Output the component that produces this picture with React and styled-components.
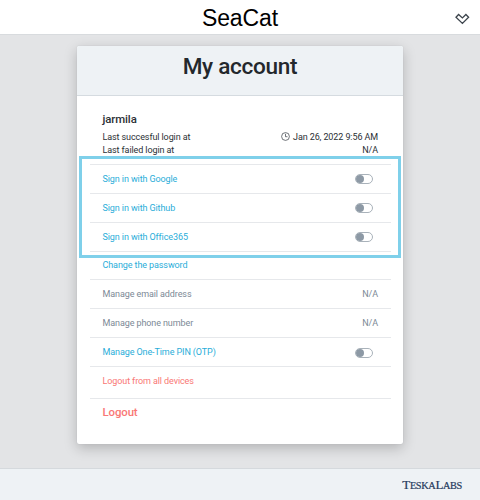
import React from "react";
import styled, { createGlobalStyle } from "styled-components";

const GlobalStyle = createGlobalStyle`
  * { box-sizing: border-box; }
  body { margin: 0; overflow: hidden; }
`;

const Page = styled.div`
  width: 480px;
  height: 500px;
  display: flex;
  flex-direction: column;
  background: #e3e4e6;
  font-family: Roboto, sans-serif;
  font-size: 9px;
  letter-spacing: -0.1px;
  color: #2b3035;
`;

const TopBar = styled.header`
  height: 35px;
  flex: none;
  display: grid;
  grid-template-columns: 1fr auto 1fr;
  align-items: center;
  padding: 0 10px;
  background: #fff;
  border-bottom: 1px solid #d8dbde;
`;

const Brand = styled.div`
  grid-column: 2;
  font: 23px/34px "Liberation Sans", sans-serif;
  letter-spacing: -0.1px;
  color: #000;
  padding-top: 1px;
`;

const MenuIcon = styled.svg`
  justify-self: end;
  width: 16px;
  height: 12px;
  margin-top: 3px;
`;

const Main = styled.main`
  flex: 1;
  display: flex;
  justify-content: center;
  align-items: flex-start;
  padding-top: 11px;
`;

const Card = styled.section`
  position: relative;
  width: 326px;
  height: 398px;
  background: #fff;
  border-radius: 2px;
  box-shadow: 0 0 1px #a9adb2, 0 4px 13px rgba(0, 0, 0, 0.22);
`;

const CardHeader = styled.div`
  height: 50px;
  border-bottom: 1px solid #d5dbe0;
  border-radius: 2px 2px 0 0;
  background: #eef2f5;
  text-align: center;
`;

const Title = styled.h1`
  margin: 0;
  font-size: 22.6px;
  font-weight: 500;
  line-height: 42px;
  letter-spacing: -0.3px;
  color: #23282c;
`;

const Profile = styled.div`
  height: 68px;
  padding: 15px 25px 0 25.5px;
`;

const UserName = styled.div`
  font-size: 11.4px;
  font-weight: 500;
  line-height: 16px;
  margin-bottom: 3.5px;
`;

const Info = styled.div`
  display: flex;
  justify-content: space-between;
  line-height: 13px;
`;

const Stamp = styled.span`
  display: flex;
  align-items: center;
  gap: 3px;
`;

const ClockIcon = styled.svg`
  width: 9px;
  height: 9px;
  margin-top: -2px;
`;

const List = styled.div`
  margin: 0 12.5px;
`;

const tones = { link: "#2aadd9", muted: "#7c8996", danger: "#f97775" };

const Row = styled.div`
  height: ${(p) => p.$height || 28.86}px;
  display: flex;
  justify-content: space-between;
  align-items: center;
  padding: 0 12.5px 0 13px;
  border-top: 1px solid #e6e8eb;
  color: ${(p) => tones[p.$tone]};
  font-size: ${(p) => (p.$strong ? "11.4px" : "inherit")};
  font-weight: ${(p) => (p.$strong ? 500 : 400)};
`;

const Label = styled.span`
  margin-top: ${(p) => p.$shift || 0}px;
`;

const Track = styled.span`
  width: 18px;
  height: 10px;
  margin-right: 5px;
  margin-top: 1px;
  border: 1px solid #a9b2ba;
  border-radius: 5px;
  display: flex;
  align-items: center;
`;

const Knob = styled.span`
  width: 8px;
  height: 8px;
  border-radius: 50%;
  background: #8d99a5;
`;

const Highlight = styled.div`
  position: absolute;
  left: 2px;
  top: 110px;
  width: 322px;
  height: 102px;
  border: 3px solid #7fd0ea;
`;

const Footer = styled.footer`
  height: 32px;
  flex: none;
  display: flex;
  align-items: center;
  justify-content: flex-end;
  padding: 2px 18px 0 0;
  background: #eef2f5;
  border-top: 1px solid #d5d9dd;
`;

const Company = styled.div`
  font: 13px/16px "Liberation Serif", serif;
  letter-spacing: -0.35px;
  color: #24395c;
  -webkit-text-stroke: 0.2px #24395c;
`;

const SmallCap = styled.span`
  font-size: 10.3px;
`;

const Toggle = () => (
  <Track>
    <Knob />
  </Track>
);

const items = [
  { label: "Sign in with Google", tone: "link", toggle: true },
  { label: "Sign in with Github", tone: "link", toggle: true },
  { label: "Sign in with Office365", tone: "link", toggle: true },
  { label: "Change the password", tone: "link", shift: -1.2 },
  { label: "Manage email address", tone: "muted", value: "N/A", shift: -0.8 },
  { label: "Manage phone number", tone: "muted", value: "N/A", shift: -0.8 },
  { label: "Manage One-Time PIN (OTP)", tone: "link", toggle: true, shift: -0.8 },
  { label: "Logout from all devices", tone: "danger", height: 32, shift: -3 },
  { label: "Logout", tone: "danger", strong: true, height: 30, shift: -3 },
];

export default function App() {
  return (
    <>
      <GlobalStyle />
      <Page>
        <TopBar>
          <Brand>SeaCat</Brand>
          <MenuIcon viewBox="0 0 16 12" fill="none" stroke="#3c444c" strokeWidth="1.3">
            <path d="M2 4.3 4.6 1.5 8.4 4.9l3.5-3.4 2.7 2.8-6.2 6.1Z" />
          </MenuIcon>
        </TopBar>
        <Main>
          <Card>
            <CardHeader>
              <Title>My account</Title>
            </CardHeader>
            <Profile>
              <UserName>jarmila</UserName>
              <Info>
                <span>Last succesful login at</span>
                <Stamp>
                  <ClockIcon viewBox="0 0 9 9" fill="none" stroke="#343a40" strokeWidth="0.7">
                    <circle cx="4.5" cy="4.5" r="3.9" />
                    <path d="M4.5 1.8v2.9h2" />
                  </ClockIcon>
                  Jan 26, 2022 9:56 AM
                </Stamp>
              </Info>
              <Info>
                <span>Last failed login at</span>
                <span>N/A</span>
              </Info>
            </Profile>
            <List>
              {items.map((item) => (
                <Row key={item.label} $tone={item.tone} $strong={item.strong} $height={item.height}>
                  <Label $shift={item.shift}>{item.label}</Label>
                  {item.toggle && <Toggle />}
                  {item.value && <Label $shift={item.shift}>{item.value}</Label>}
                </Row>
              ))}
            </List>
            <Highlight />
          </Card>
        </Main>
        <Footer>
          <Company>
            T<SmallCap>ESKA</SmallCap>L<SmallCap>ABS</SmallCap>
          </Company>
        </Footer>
      </Page>
    </>
  );
}
